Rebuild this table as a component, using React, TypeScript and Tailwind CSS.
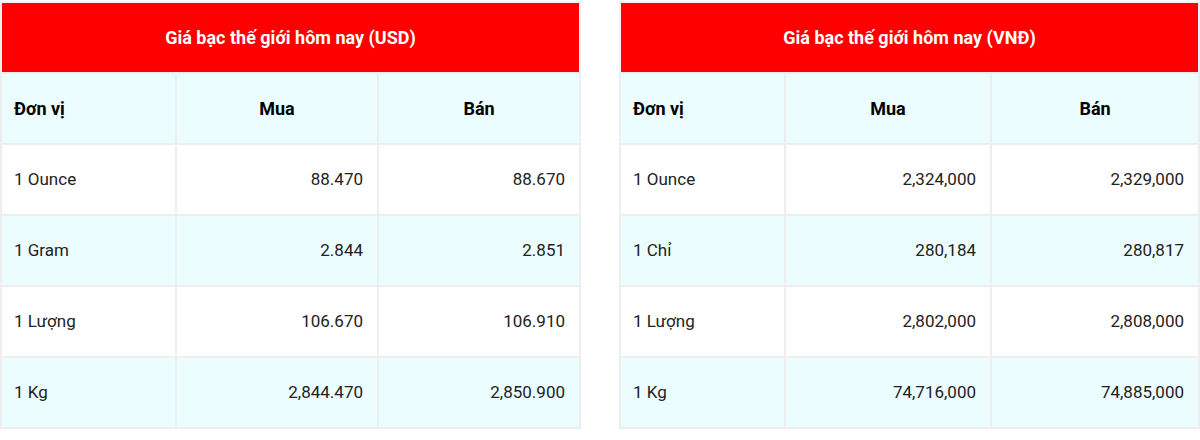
const usd = {
  title: "Giá bạc thế giới hôm nay (USD)",
  cols: ["w-[175px]", "w-[202px]", "w-[202px]"],
  rows: [
    ["1 Ounce", "88.470", "88.670"],
    ["1 Gram", "2.844", "2.851"],
    ["1 Lượng", "106.670", "106.910"],
    ["1 Kg", "2,844.470", "2,850.900"],
  ],
};

const vnd = {
  title: "Giá bạc thế giới hôm nay (VNĐ)",
  cols: ["w-[165px]", "w-[206px]", "w-[208px]"],
  rows: [
    ["1 Ounce", "2,324,000", "2,329,000"],
    ["1 Chỉ", "280,184", "280,817"],
    ["1 Lượng", "2,802,000", "2,808,000"],
    ["1 Kg", "74,716,000", "74,885,000"],
  ],
};

type TableData = typeof usd;

const PriceTable = ({ data }: { data: TableData }) => (
  <table className="w-[578px] table-fixed border-collapse border-2 border-[#f2f2f2] text-[17px] text-[#222]">
    <colgroup>
      {data.cols.map((c, i) => (
        <col key={i} className={c} />
      ))}
    </colgroup>
    <thead>
      <tr>
        <th colSpan={3} className="h-[71px] bg-[#ff0000] text-center text-[18px] font-bold text-white">
          {data.title}
        </th>
      </tr>
      <tr className="bg-[#ebfdff] text-[18px]">
        <th className="h-[71px] border-2 border-[#eeeeee] pl-3 pr-[14px] text-left font-bold text-black">Đơn vị</th>
        <th className="h-[71px] border-2 border-[#eeeeee] px-3 text-center font-bold text-black">Mua</th>
        <th className="h-[71px] border-2 border-[#eeeeee] px-3 text-center font-bold text-black">Bán</th>
      </tr>
    </thead>
    <tbody>
      {data.rows.map((r, i) => (
        <tr key={i} className={i % 2 === 0 ? "bg-white" : "bg-[#ebfdff]"}>
          <td className="h-[71px] border-2 border-[#eeeeee] pl-3 pr-[14px] text-left">{r[0]}</td>
          <td className="h-[71px] border-2 border-[#eeeeee] pl-3 pr-[14px] text-right">{r[1]}</td>
          <td className="h-[71px] border-2 border-[#eeeeee] pl-3 pr-[14px] text-right">{r[2]}</td>
        </tr>
      ))}
    </tbody>
  </table>
);

export default function App() {
  return (
    <div className="h-[440px] w-[1200px] bg-white pt-[1px] font-['Roboto',sans-serif]">
      <div className="flex gap-[38px]">
        <PriceTable data={usd} />
        <PriceTable data={vnd} />
      </div>
    </div>
  );
}
